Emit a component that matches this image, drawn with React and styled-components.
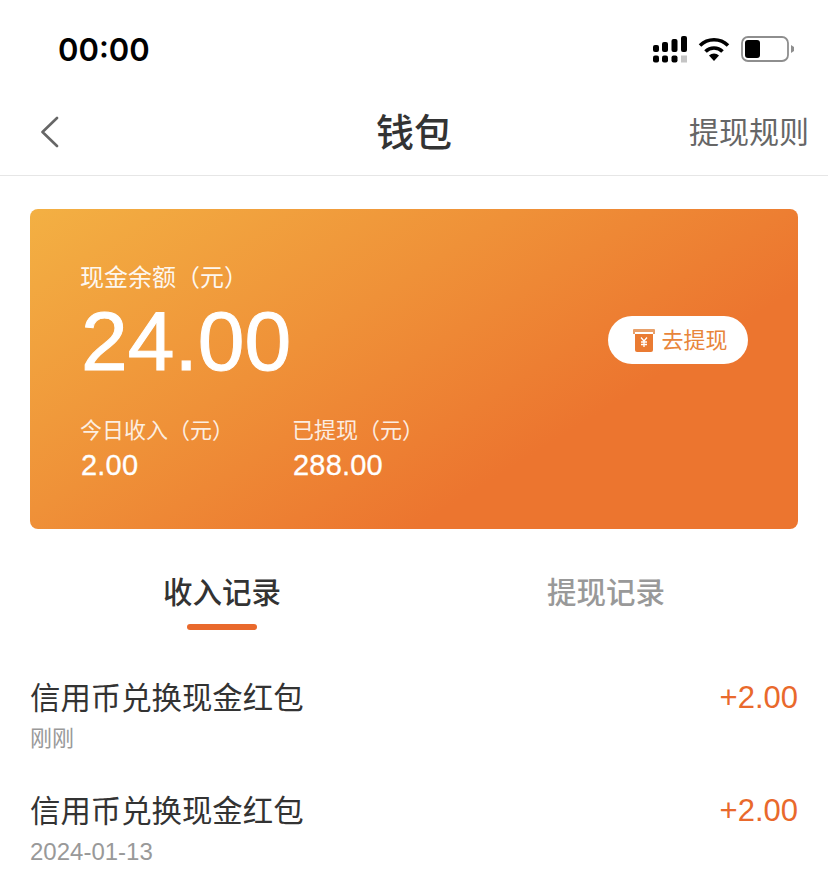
import styled, { createGlobalStyle } from "styled-components";

const GlobalStyle = createGlobalStyle`
  html, body {
    margin: 0;
    padding: 0;
    background: #fff;
  }
  body {
    font-family: "Liberation Sans", "Noto Sans CJK SC", sans-serif;
  }
`;

const records = [
  { title: "信用币兑换现金红包", time: "刚刚", amount: "+2.00" },
  { title: "信用币兑换现金红包", time: "2024-01-13", amount: "+2.00", numeric: true },
];

const Page = styled.div`
  width: 828px;
  height: 877px;
  overflow: hidden;
  background: #fff;
`;

const StatusBar = styled.div`
  height: 88px;
  box-sizing: border-box;
  padding: 10px 33px 0 58px;
  display: flex;
  justify-content: space-between;
  align-items: center;
`;

const Clock = styled.div`
  font-family: "Inter", sans-serif;
  font-size: 31px;
  font-weight: 600;
  color: #000;
`;

const StatusIcons = styled.div`
  display: flex;
  align-items: center;
  gap: 11px;
`;

const NavBar = styled.div`
  height: 88px;
  box-sizing: border-box;
  border-bottom: 1px solid #e6e6e6;
  padding: 0 19px 0 41px;
  display: flex;
  align-items: center;
  justify-content: space-between;
  position: relative;
`;

const NavTitle = styled.div`
  position: absolute;
  left: 0;
  right: 0;
  text-align: center;
  font-size: 38px;
  font-weight: 500;
  color: #333;
  margin-bottom: 4px;
  pointer-events: none;
`;

const NavAction = styled.div`
  font-size: 30px;
  color: #666;
  margin-bottom: 3px;
`;

const Card = styled.div`
  margin: 33px 30px 0;
  height: 320px;
  box-sizing: border-box;
  border-radius: 8px;
  padding: 52px 50px 0 51px;
  background: linear-gradient(148deg, #f3b043 0%, #ef9138 38%, #ec752f 70%, #ec752f 100%);
  display: flex;
  justify-content: space-between;
  align-items: flex-start;
  color: #fff;
`;

const Balance = styled.div`
  display: flex;
  flex-direction: column;
`;

const BalanceLabel = styled.div`
  font-size: 24px;
  line-height: 34px;
  margin-left: -1px;
  color: #fff;
  opacity: 0.92;
`;

const BalanceValue = styled.div`
  font-size: 84px;
  line-height: 90px;
  margin-top: 1px;
  -webkit-text-stroke: 1px #fff;
`;

const StatRow = styled.div`
  display: flex;
  margin-top: 28px;
`;

const Stat = styled.div`
  width: 212px;
`;

const StatLabel = styled.div`
  font-size: 22px;
  line-height: 34px;
  margin-left: -1px;
  opacity: 0.85;
`;

const StatValue = styled.div`
  font-size: 29px;
  line-height: 36px;
  margin-top: -1px;
  letter-spacing: 0.2px;
  -webkit-text-stroke: 0.3px #fff;
`;

const WithdrawButton = styled.div`
  margin-top: 55px;
  width: 140px;
  height: 48px;
  box-sizing: border-box;
  padding-left: 4px;
  border-radius: 24px;
  background: #fff;
  display: flex;
  align-items: center;
  justify-content: center;
  gap: 5px;
  font-size: 22px;
  color: #e8853a;
`;

const ButtonLabel = styled.span`
  margin-bottom: 4px;
`;

const Tabs = styled.div`
  display: flex;
  justify-content: center;
  padding-top: 44px;
  gap: 266px;
`;

const Tab = styled.div`
  display: flex;
  flex-direction: column;
  align-items: center;
  font-size: 29.5px;
  line-height: 40px;
  font-weight: 500;
  color: ${(props) => (props.active ? "#333" : "#999")};
`;

const TabBar = styled.div`
  width: 70px;
  height: 6px;
  border-radius: 3px;
  margin-top: 11px;
  background: ${(props) => (props.active ? "#e9692c" : "transparent")};
`;

const List = styled.div`
  padding: 47px 30px 0;
  display: flex;
  flex-direction: column;
  gap: 36px;
`;

const RecordRow = styled.div`
  display: flex;
  justify-content: space-between;
  align-items: flex-start;
`;

const RecordTitle = styled.div`
  font-size: 30.4px;
  line-height: 42px;
  color: #333;
`;

const RecordTime = styled.div`
  font-size: ${(props) => (props.numeric ? "24px" : "22px")};
  line-height: 30px;
  margin-top: 5px;
  color: #999;
`;

const RecordAmount = styled.div`
  font-size: 31px;
  line-height: 42px;
  color: #e9692c;
`;

const SignalIcon = () => (
  <svg width="34" height="27" viewBox="0 0 34 27" fill="#000">
    <rect x="0" y="9" width="6" height="7" rx="2" />
    <rect x="9" y="6" width="6" height="10" rx="2" />
    <rect x="18.5" y="3" width="6" height="13" rx="2" />
    <rect x="28" y="0" width="6" height="16" rx="2" />
    <rect x="0" y="19.5" width="6" height="7" rx="2" />
    <rect x="9" y="19.5" width="6" height="7" rx="2" />
    <rect x="18.5" y="19.5" width="6" height="7" rx="2" />
    <rect x="28" y="19.5" width="6" height="7" fill="#c4c4c4" />
  </svg>
);

const WifiIcon = () => (
  <svg width="32" height="24" viewBox="0 0 32 24">
    <path d="M16 24 L11 18.5 A7.5 7.5 0 0 1 21 18.5 Z" fill="#000" />
    <path d="M7.5 14.5 A12 12 0 0 1 24.5 14.5" fill="none" stroke="#000" strokeWidth="3.6" />
    <path d="M2 8.5 A20 20 0 0 1 30 8.5" fill="none" stroke="#000" strokeWidth="3.6" />
  </svg>
);

const BatteryIcon = () => (
  <svg width="54" height="26" viewBox="0 0 54 26">
    <rect x="1" y="1" width="46" height="24" rx="6" fill="none" stroke="#8e8e8e" strokeWidth="1.8" />
    <rect x="4" y="4" width="15" height="18" rx="3" fill="#000" />
    <path d="M50 9 L53 11 V15 L50 17 Z" fill="#8e8e8e" />
  </svg>
);

const BackIcon = () => (
  <svg width="18" height="32" viewBox="0 0 18 32" fill="none">
    <path d="M16 2 L1.5 16 L16 30" stroke="#666" strokeWidth="2.6" strokeLinecap="round" strokeLinejoin="round" />
  </svg>
);

const PocketIcon = () => (
  <svg width="24" height="25" viewBox="0 0 24 25">
    <path d="M1 2 Q1 1 2 1 H22 Q23 1 23 2 V6 H21 V4 H3 V6 H1 Z" fill="#e8a06a" />
    <path d="M3 6 H21 V22 Q21 24 19 24 H5 Q3 24 3 22 Z" fill="#ea7b32" />
    <path d="M9 9.5 L12 13 L15 9.5 M12 13 V19 M9 14 H15 M9 16.5 H15" fill="none" stroke="#fff" strokeWidth="1.3" />
  </svg>
);

export default function App() {
  return (
    <Page>
      <GlobalStyle />
      <StatusBar>
        <Clock>00:00</Clock>
        <StatusIcons>
          <SignalIcon />
          <WifiIcon />
          <BatteryIcon />
        </StatusIcons>
      </StatusBar>
      <NavBar>
        <BackIcon />
        <NavTitle>钱包</NavTitle>
        <NavAction>提现规则</NavAction>
      </NavBar>
      <Card>
        <Balance>
          <BalanceLabel>现金余额（元）</BalanceLabel>
          <BalanceValue>24.00</BalanceValue>
          <StatRow>
            <Stat>
              <StatLabel>今日收入（元）</StatLabel>
              <StatValue>2.00</StatValue>
            </Stat>
            <Stat>
              <StatLabel>已提现（元）</StatLabel>
              <StatValue>288.00</StatValue>
            </Stat>
          </StatRow>
        </Balance>
        <WithdrawButton>
          <PocketIcon />
          <ButtonLabel>去提现</ButtonLabel>
        </WithdrawButton>
      </Card>
      <Tabs>
        <Tab active>
          收入记录
          <TabBar active />
        </Tab>
        <Tab>
          提现记录
          <TabBar />
        </Tab>
      </Tabs>
      <List>
        {records.map((record, index) => (
          <RecordRow key={index}>
            <div>
              <RecordTitle>{record.title}</RecordTitle>
              <RecordTime numeric={record.numeric}>{record.time}</RecordTime>
            </div>
            <RecordAmount>{record.amount}</RecordAmount>
          </RecordRow>
        ))}
      </List>
    </Page>
  );
}
